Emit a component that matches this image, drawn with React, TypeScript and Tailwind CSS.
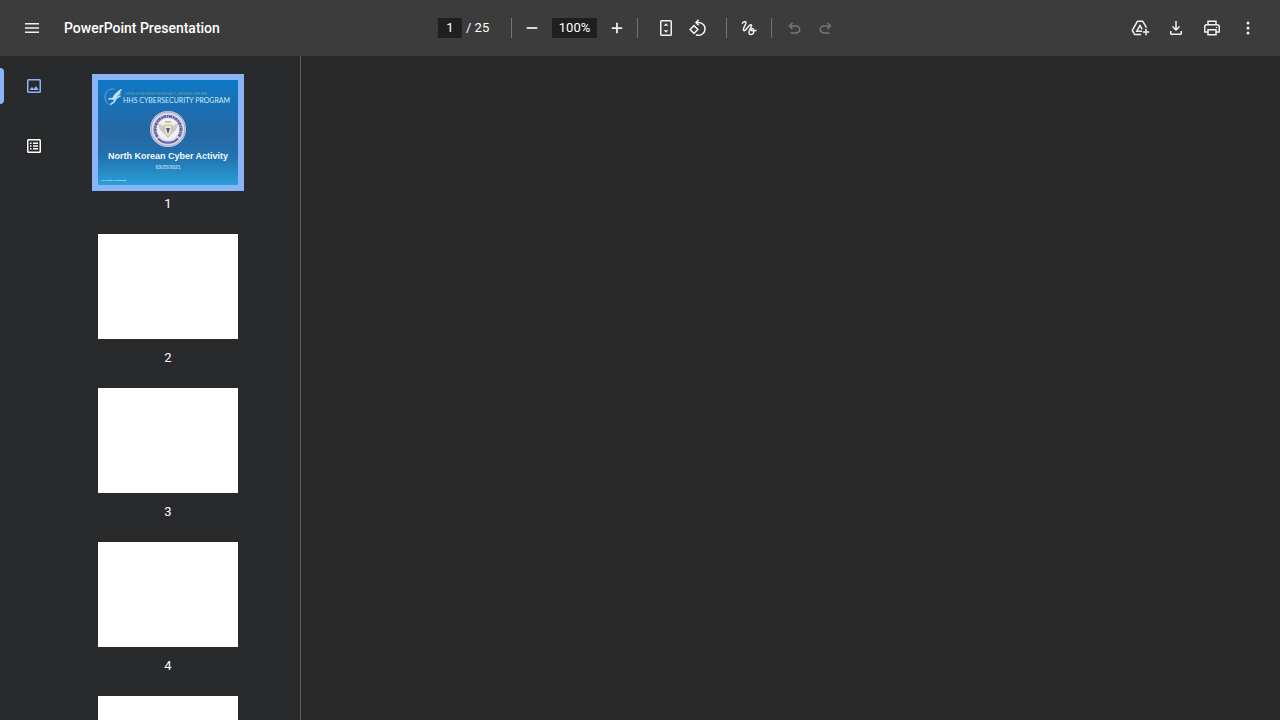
import React, { useState } from 'react';

interface IconButtonProps {
    label: string;
    disabled?: boolean;
    onClick?: () => void;
    children: React.ReactNode;
}

const PAGE_COUNT = 25;

function Icon({ children }: { children: React.ReactNode }) {
    return (
        <svg
            viewBox="0 0 20 20"
            className="w-5 h-5"
            fill="none"
            stroke="currentColor"
            strokeWidth="1.5"
            aria-hidden="true"
        >
            {children}
        </svg>
    );
}

function IconButton({ label, disabled = false, onClick, children }: IconButtonProps) {
    return (
        <button
            type="button"
            aria-label={label}
            disabled={disabled}
            onClick={onClick}
            className="w-8 h-8 shrink-0 flex items-center justify-center rounded-full text-[#f1f1f1] hover:bg-white/10 disabled:text-[#757575] disabled:hover:bg-transparent"
        >
            <Icon>{children}</Icon>
        </button>
    );
}

function Divider() {
    return <div className="w-px h-5 shrink-0 bg-[#757575]" />;
}

function CoverSlide() {
    return (
        <svg viewBox="0 0 140 105" className="w-full h-full" aria-hidden="true">
            <defs>
                <linearGradient id="cover" x1="0" y1="0" x2="0" y2="1">
                    <stop offset="0" stopColor="#0f78c4" />
                    <stop offset="0.5" stopColor="#2468a4" />
                    <stop offset="0.72" stopColor="#2272ae" />
                    <stop offset="1" stopColor="#2a9fd8" />
                </linearGradient>
            </defs>
            <rect width="140" height="105" fill="url(#cover)" />

            {/* eagle mark */}
            <g fill="none" strokeLinecap="round">
                <path d="M16 9c-5-1-9 3-9 8 0 4 2 7 6 8" stroke="#5fa6dc" strokeWidth="1" />
                <path d="M23 10c-4 3-6 4-8 8M22 13c-4 2-5 4-6 6M22 16c-3 1-4 2-5 4" stroke="#c4e2f6" strokeWidth="1.6" />
                <path d="M11 19c2-1 4 0 6 1 0 2-2 3-4 4" stroke="#b5d9f2" strokeWidth="1.6" />
            </g>
            <text x="26" y="15" fontSize="3" fill="#7fa89a" fontFamily="Lato, sans-serif">OFFICE OF INFORMATION SECURITY | SECURING ONE HHS</text>
            <text x="25" y="23" fontSize="7" fill="#d3e9f8" fontFamily="Lato, sans-serif">HHS CYBERSECURITY PROGRAM</text>

            {/* seal */}
            <circle cx="70" cy="49" r="18" fill="#d9dbe4" />
            <circle cx="70" cy="49" r="17" fill="none" stroke="#9096b4" strokeWidth="0.8" />
            <path d="M59.500 57a13 13 0 1 1 21 0" fill="none" stroke="#6461b0" strokeWidth="3" strokeDasharray="3.200 0.500 1.800 0.400" />
            <path d="M60 58.500a13.800 13.800 0 0 0 20 0" fill="none" stroke="#6b5fa6" strokeWidth="2" />
            <circle cx="70" cy="49" r="11" fill="#eff0f3" />
            <path d="M60 44c3 0 5 1 7 4h6c2-3 4-4 7-4-1 5-3 8-6 9l-4 5-4-5c-3-1-5-4-6-9z" fill="#d0c9c0" />
            <path d="M66 45h8v5c0 3-2 5-4 7-2-2-4-4-4-7z" fill="#e9e3cf" stroke="#a39b94" strokeWidth="0.6" />
            <path d="M68 48h4l-2 6z" fill="#565182" />
            <path d="M67 42h6" stroke="#c7ab5e" strokeWidth="1.4" />

            <text x="70" y="79" fontSize="9" fontWeight="700" textAnchor="middle" fill="#f4faff" fontFamily="Liberation Sans, sans-serif">North Korean Cyber Activity</text>
            <text x="70" y="89" fontSize="5" fontWeight="700" textAnchor="middle" fill="#b5d8ee" fontFamily="Liberation Sans, sans-serif">03/25/2021</text>
            <text x="3" y="101" fontSize="2" fontWeight="700" fill="#d8f0fc" fontFamily="Liberation Sans, sans-serif">TLP: WHITE, ID# 20210325</text>
        </svg>
    );
}

export default function App() {
    const [currentPage, setCurrentPage] = useState(1);
    const [pageText, setPageText] = useState('1');
    const [zoom, setZoom] = useState('100%');

    const changeZoom = (step: number) => {
        const value = parseInt(zoom, 10) || 100;
        setZoom(`${Math.min(500, Math.max(25, value + step))}%`);
    };

    const selectPage = (page: number) => {
        setCurrentPage(page);
        setPageText(String(page));
    };

    const pages = Array.from({ length: PAGE_COUNT }, (_, i) => i + 1);

    return (
        <div className="h-screen flex flex-col overflow-hidden bg-[#282828] text-[13px] leading-5 text-white font-[Roboto,sans-serif]">
            <header className="h-14 shrink-0 flex items-center px-4 bg-[#3c3c3c]">
                <div className="flex-1 min-w-0 flex items-center gap-4">
                    <IconButton label="Menu">
                        <path d="M3 5.75h14M3 10h14M3 14.25h14" />
                    </IconButton>
                    <h1 className="text-sm font-medium truncate">PowerPoint Presentation</h1>
                </div>

                <div className="flex items-center">
                    <input
                        type="text"
                        aria-label="Page number"
                        value={pageText}
                        onChange={(e) => setPageText(e.target.value)}
                        className="w-6 h-5 bg-[#1f1f1f] text-center outline-none"
                    />
                    <span className="w-[29px] pl-1 whitespace-nowrap">/ {PAGE_COUNT}</span>
                    <div className="flex items-center ml-5">
                        <Divider />
                        <div className="flex items-center gap-1 px-1">
                            <IconButton label="Zoom out" onClick={() => changeZoom(-25)}>
                                <path d="M4.75 10h10.5" strokeWidth="1.75" />
                            </IconButton>
                            <input
                                type="text"
                                aria-label="Zoom level"
                                value={zoom}
                                onChange={(e) => setZoom(e.target.value)}
                                className="w-[45px] h-5 bg-[#1f1f1f] text-center outline-none"
                            />
                            <IconButton label="Zoom in" onClick={() => changeZoom(25)}>
                                <path d="M4.75 10h10.5M10 4.75v10.5" strokeWidth="1.75" />
                            </IconButton>
                        </div>
                        <Divider />
                        <div className="flex items-center px-3">
                            <IconButton label="Fit to page">
                                <rect x="4.75" y="2.75" width="10.5" height="14.5" rx="0.75" />
                                <path d="M10 5.2l2.4 2.6H7.6zM10 14.8l2.4-2.6H7.6z" fill="currentColor" stroke="none" />
                            </IconButton>
                            <IconButton label="Rotate counterclockwise">
                                <path d="M6 7.6l3.9 3.9L6 15.4l-3.9-3.9z" />
                                <path d="M8.4 4.5h2.2a6.4 6.4 0 1 1-2.6 12.2" />
                                <path d="M10.6 1.9L8 4.5l2.6 2.6" />
                            </IconButton>
                        </div>
                        <Divider />
                        <div className="flex items-center px-1.5">
                            <IconButton label="Draw">
                                <path d="M3 5.600C4.300 3.900 6.600 2.900 7 4.500c.5 1.900-3.400 5.200-2.600 7.500 1.300 3.300 5-5.200 7.300-5.200 2.800 0-2.200 5.500-1.800 8 .4 2.400 3.400 2.300 4.500.4 1.100-2 .4-4.600-1.200-4.700-1.700 0-1.600 2-.2 2.300 1.400.2 2.500-.5 4.500-.3" />
                            </IconButton>
                        </div>
                        <Divider />
                        <div className="flex items-center pl-1.5">
                            <IconButton label="Undo" disabled>
                                <path d="M8.500 4.900L5.500 7.900l3 3M5.800 7.900h6.400a3.500 3.500 0 0 1 0 7H6.500" />
                            </IconButton>
                            <IconButton label="Redo" disabled>
                                <path d="M11.500 4.900l3 3-3 3M14.200 7.900H7.800a3.500 3.500 0 0 0 0 7h5.700" />
                            </IconButton>
                        </div>
                    </div>
                </div>

                <div className="flex-1 flex items-center justify-end gap-1">
                    <IconButton label="Save to Drive">
                        <path d="M16.500 9.600l-3.700-6.300H7.400L2.300 12.400l2.300 4.100H11" strokeLinejoin="round" />
                        <path d="M12 13.200H6.800L10 7.600l2.200 3.800" />
                        <path d="M16 10.800v6.400M12.800 14h6.400" />
                    </IconButton>
                    <IconButton label="Download">
                        <path d="M10 3v9M6.500 8.500L10 12l3.500-3.500M4.750 13v2.500c0 .4.3.75.750.75h9c.4 0 .75-.3.75-.750V13" />
                    </IconButton>
                    <IconButton label="Print">
                        <path d="M6 6.500V3.250h8V6.500M6 14H2.750V8.700c0-1.100.8-1.950 1.950-1.950h10.600c1.100 0 1.950.8 1.950 1.950V14H14" />
                        <rect x="6" y="11.750" width="8" height="5" />
                        <circle cx="14.500" cy="9.400" r="0.750" fill="currentColor" stroke="none" />
                    </IconButton>
                    <IconButton label="More actions">
                        <g fill="currentColor" stroke="none">
                            <circle cx="10" cy="5" r="1.500" />
                            <circle cx="10" cy="10" r="1.500" />
                            <circle cx="10" cy="15" r="1.500" />
                        </g>
                    </IconButton>
                </div>
            </header>

            <div className="flex-1 min-h-0 flex">
                <aside className="w-[301px] shrink-0 flex bg-[#292a2c] border-r border-[#5f6062]">
                    <nav className="w-[68px] shrink-0 flex flex-col gap-6 pt-3">
                        <button
                            type="button"
                            aria-label="Thumbnails"
                            aria-pressed="true"
                            className="h-9 flex items-center text-[#8ab4f8]"
                        >
                            <span className="w-1 h-9 rounded-r bg-[#8ab4f8]" />
                            <span className="ml-5">
                                <Icon>
                                    <rect x="3.750" y="3.750" width="12.500" height="12.500" rx="0.750" />
                                    <path d="M5.500 14l2.500-3.300 1.700 2.200 2.300-3 2.800 4.100z" fill="currentColor" stroke="none" />
                                </Icon>
                            </span>
                        </button>
                        <button
                            type="button"
                            aria-label="Document outline"
                            aria-pressed="false"
                            className="h-9 flex items-center justify-center text-white"
                        >
                            <Icon>
                                <rect x="3.750" y="3.750" width="12.500" height="12.500" rx="0.750" />
                                <path d="M9 7.200h5M9 10h5M9 12.800h5M6 7.200h1.500M6 10h1.500M6 12.800h1.500" />
                            </Icon>
                        </button>
                    </nav>

                    <div className="flex-1 flex flex-col items-center gap-5 pt-6 pr-8 overflow-y-auto [scrollbar-width:none]">
                        {pages.map((page) => (
                            <div key={page} className="shrink-0 flex flex-col items-center">
                                <button
                                    type="button"
                                    aria-label={`Page ${page}`}
                                    onClick={() => selectPage(page)}
                                    className={`w-[140px] h-[105px] bg-white ${page === currentPage ? 'ring-6 ring-[#8ab4f8]' : ''}`}
                                >
                                    {page === 1 && <CoverSlide />}
                                </button>
                                <span className="mt-[9px]">{page}</span>
                            </div>
                        ))}
                    </div>
                </aside>

                <main className="flex-1 bg-[#282828]" />
            </div>
        </div>
    );
}
